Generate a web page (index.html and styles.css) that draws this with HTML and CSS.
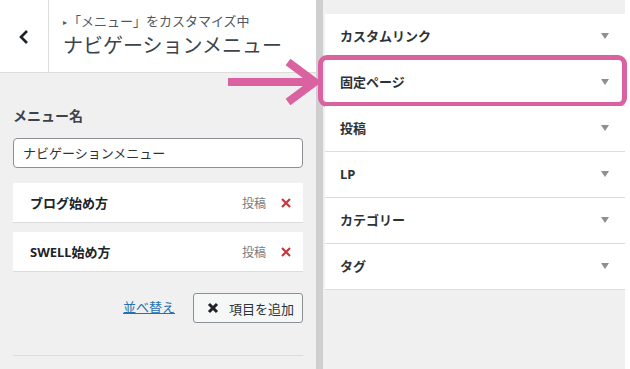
FILE: index.html
```html
<!DOCTYPE html>
<html lang="ja">
<head>
    <meta charset="UTF-8">
    <title>メニュー - カスタマイズ</title>
    <link rel="stylesheet" href="styles.css">
</head>
<body>
    <div class="sidebar">
        <div class="header">
            <div class="back">
                <svg width="12" height="16" viewBox="0 0 12 16"><path d="M9 2 L3 8 L9 14" fill="none" stroke="#1d2327" stroke-width="2.6"/></svg>
            </div>
            <div class="title-block">
                <div class="subtitle"><span class="tri">▸</span>「メニュー」をカスタマイズ中</div>
                <div class="title">ナビゲーションメニュー</div>
            </div>
        </div>

        <div class="content">
            <div class="label">メニュー名</div>
            <div class="input">ナビゲーションメニュー</div>

            <div class="menu-item">
                <span class="item-name">ブログ始め方</span>
                <span class="item-type">投稿</span>
                <svg class="remove" width="10" height="10" viewBox="0 0 10 10"><path d="M1 1 L9 9 M9 1 L1 9" stroke="#c8393f" stroke-width="2.2"/></svg>
            </div>
            <div class="menu-item">
                <span class="item-name">SWELL始め方</span>
                <span class="item-type">投稿</span>
                <svg class="remove" width="10" height="10" viewBox="0 0 10 10"><path d="M1 1 L9 9 M9 1 L1 9" stroke="#c8393f" stroke-width="2.2"/></svg>
            </div>

            <div class="actions">
                <a class="reorder" href="#">並べ替え</a>
                <button class="add-btn">
                    <svg width="12" height="12" viewBox="0 0 12 12"><path d="M2 2 L10 10 M10 2 L2 10" stroke="#1d2327" stroke-width="3"/></svg>
                    項目を追加
                </button>
            </div>

            <div class="divider"></div>
        </div>
    </div>

    <div class="scrollbar"></div>

    <div class="panel">
        <div class="section">カスタムリンク<span class="caret"></span></div>
        <div class="section active">固定ページ<span class="caret"></span><span class="highlight"></span></div>
        <div class="section">投稿<span class="caret"></span></div>
        <div class="section">LP<span class="caret"></span></div>
        <div class="section">カテゴリー<span class="caret"></span></div>
        <div class="section">タグ<span class="caret"></span></div>
    </div>

    <svg class="arrow" width="92" height="48" viewBox="0 0 92 48">
        <path d="M0 24 H86" stroke="#da62a0" stroke-width="8"/>
        <path d="M60 4 L87 24 L60 44" fill="none" stroke="#da62a0" stroke-width="8"/>
    </svg>
</body>
</html>
```

FILE: styles.css
```css
* {
    margin: 0;
    padding: 0;
    box-sizing: border-box;
}

body {
    font-family: "Noto Sans", "Noto Sans CJK JP", sans-serif;
    background: #fff;
    color: #1d2327;
    display: flex;
    height: 369px;
    overflow: hidden;
    position: relative;
}

/* left customizer column */
.sidebar {
    width: 316px;
    background: #f0f0f1;
}

.header {
    display: flex;
    height: 73px;
    background: #fff;
    border-bottom: 1px solid #dcdcde;
}

.back {
    width: 49px;
    border-right: 1px solid #dcdcde;
    display: flex;
    align-items: center;
    justify-content: center;
    padding-top: 1px;
}

.title-block {
    padding: 11px 0 0 14px;
}

.subtitle {
    font-size: 13px;
    line-height: 20px;
    color: #50575e;
}

.subtitle .tri {
    font-size: 8px;
    margin-right: 1px;
    vertical-align: 1px;
}

.title {
    font-size: 20px;
    line-height: 28px;
    color: #3c434a;
}

.content {
    padding: 33px 13px 0;
}

.label {
    font-size: 14px;
    font-weight: bold;
    line-height: 20px;
    color: #3c434a;
    margin-bottom: 12px;
}

.input {
    height: 30px;
    background: #fff;
    border: 1px solid #8c8f94;
    border-radius: 4px;
    font-size: 13px;
    line-height: 28px;
    padding-left: 9px;
    color: #2c3338;
    margin-bottom: 15px;
}

.menu-item {
    display: flex;
    align-items: center;
    height: 40px;
    background: #fff;
    border-bottom: 1px solid #dcdcde;
    padding: 0 12px 0 17px;
    margin-bottom: 9px;
}

.item-name {
    flex: 1;
    font-size: 13px;
    font-weight: bold;
}

.item-type {
    font-size: 12px;
    color: #787c82;
    margin-right: 15px;
}

.actions {
    display: flex;
    justify-content: flex-end;
    align-items: center;
    margin-top: 21px;
    gap: 18px;
}

.reorder {
    font-size: 13px;
    color: #2271b1;
    margin-top: -3px;
}

.add-btn {
    display: flex;
    align-items: center;
    gap: 10px;
    height: 30px;
    width: 110px;
    padding-left: 13px;
    background: #f6f7f7;
    border: 1px solid #8c8f94;
    border-radius: 3px;
    font-family: inherit;
    font-size: 13px;
    color: #2c3338;
}

.divider {
    border-top: 1px solid #dcdcde;
    margin-top: 32px;
}

.scrollbar {
    width: 7px;
    background: #cfcfcf;
}

/* right "add items" panel */
.panel {
    width: 302px;
    background: #f0f0f1;
    padding: 14px 0 0 2px;
}

.section {
    position: relative;
    display: flex;
    align-items: center;
    justify-content: space-between;
    height: 46px;
    background: #fff;
    border-bottom: 1px solid #dcdcde;
    padding: 0 16px 2px 15px;
    font-size: 13px;
    font-weight: bold;
    color: #2c3338;
}

.caret {
    width: 0;
    height: 0;
    border-left: 4px solid transparent;
    border-right: 4px solid transparent;
    border-top: 6px solid #8c8f94;
}

.highlight {
    position: absolute;
    top: -5px;
    left: -7px;
    right: -2px;
    bottom: -2px;
    border: 5px solid #da62a0;
    border-radius: 9px;
}

.arrow {
    position: absolute;
    left: 228px;
    top: 58px;
}
```
